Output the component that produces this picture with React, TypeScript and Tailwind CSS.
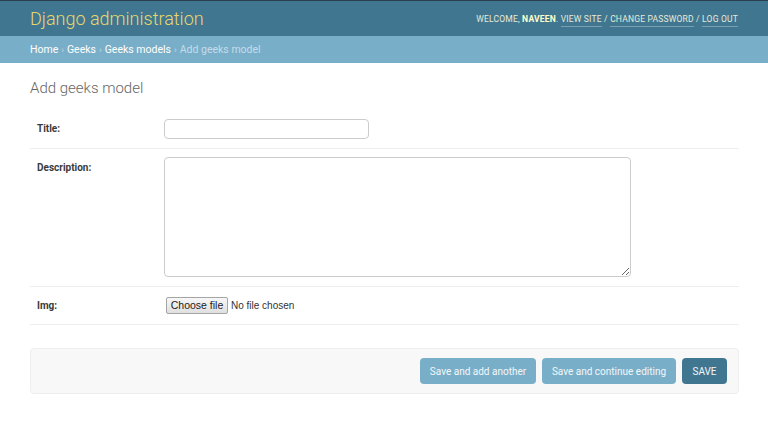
const font = "font-['Roboto','Liberation_Sans',sans-serif]"

type FormRowProps = {
  label: string
  className: string
  alignTop?: boolean
  children: React.ReactNode
}

function FormRow({ label, className, alignTop, children }: FormRowProps) {
  return (
    <div
      className={
        'flex border-b border-[#eee] px-[7px] ' +
        (alignTop ? 'items-start ' : 'items-center ') +
        className
      }
    >
      <label
        className={
          'w-[127px] shrink-0 text-[10px] font-bold leading-[14px] text-[#3a3a3a] ' +
          (alignTop ? 'pt-[4px]' : 'pt-[1px]')
        }
      >
        {label}
      </label>
      {children}
    </div>
  )
}

function Crumb({ children }: { children: React.ReactNode }) {
  return <span className="text-white">{children}</span>
}

function Sep() {
  return <span className="mx-[3px] text-[9px] text-[#c4dce8]">›</span>
}

export default function App() {
  return (
    <div className={'min-h-[439px] bg-white ' + font}>
      <header className="flex h-[36px] items-center justify-between border-t border-[#2a3f4b] bg-[#417690] px-[30px]">
        <div className="text-[18px] font-light leading-none text-[#e8d86a]">
          Django administration
        </div>
        <div className="pt-[1px] text-[8.5px] uppercase leading-none tracking-[0.2px] text-[#e6ecd8]">
          Welcome, <strong className="font-bold text-[#ffffcc]">Naveen</strong>.{' '}
          <a className="border-b border-white/30 pb-[2px]">View site</a> /{' '}
          <a className="border-b border-white/30 pb-[2px]">Change password</a> /{' '}
          <a className="border-b border-white/30 pb-[2px]">Log out</a>
        </div>
      </header>

      <nav className="flex h-[27px] items-center bg-[#79aec8] px-[30px] pt-[1px] text-[10.5px] leading-none">
        <Crumb>Home</Crumb>
        <Sep />
        <Crumb>Geeks</Crumb>
        <Sep />
        <Crumb>Geeks models</Crumb>
        <Sep />
        <span className="text-[#c4dce8]">Add geeks model</span>
      </nav>

      <main className="pl-[30px] pr-[29px] pt-[15px]">
        <h1 className="mb-[11px] text-[15px] font-light leading-[20px] text-[#666]">
          Add geeks model
        </h1>

        <form>
          <FormRow label="Title:" className="h-[40px]">
            <input
              type="text"
              className="h-[20px] w-[205px] rounded-[4px] border border-[#ccc] bg-white px-[5px] text-[11px] outline-none"
            />
          </FormRow>

          <FormRow label="Description:" className="h-[138px] pt-[8px]" alignTop>
            <textarea className="h-[120px] w-[467px] resize rounded-[4px] border border-[#ccc] bg-white text-[11px] outline-none" />
          </FormRow>

          <FormRow label="Img:" className="h-[38px]">
            <div className="ml-[2px] flex items-center font-['Liberation_Sans','DejaVu_Sans',sans-serif] text-[10px] text-[#333]">
              <span className="flex h-[17px] w-[62px] items-center justify-center rounded-[2px] border border-[#a5a5a5] bg-gradient-to-b from-[#f7f7f7] to-[#e0e0e0] text-[10.5px] text-[#222]">
                Choose file
              </span>
              <span className="ml-[3px]">No file chosen</span>
            </div>
          </FormRow>

          <div className="mt-[23px] flex h-[46px] items-center justify-end gap-[6px] rounded-[4px] border border-[#eee] bg-[#f8f8f8] pr-[11px]">
            <button
              type="button"
              className="h-[26px] w-[116px] rounded-[4px] bg-[#79aec8] text-[10px] text-[#f2f7fa]"
            >
              Save and add another
            </button>
            <button
              type="button"
              className="h-[26px] w-[134px] rounded-[4px] bg-[#79aec8] text-[10px] text-[#f2f7fa]"
            >
              Save and continue editing
            </button>
            <button
              type="button"
              className="h-[26px] w-[45px] rounded-[4px] bg-[#417690] text-[10px] uppercase text-[#f2f7fa]"
            >
              Save
            </button>
          </div>
        </form>
      </main>
    </div>
  )
}
